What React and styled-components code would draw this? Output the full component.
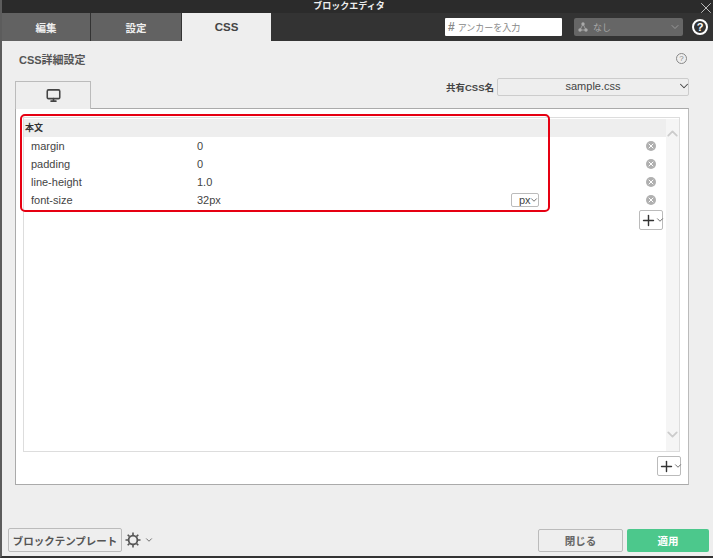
import React from 'react'
import styled, { createGlobalStyle } from 'styled-components'
import { Monitor, ChevronDown, ChevronUp, X, Plus } from 'lucide-react'

const GlobalStyle = createGlobalStyle`
  * { box-sizing: border-box; }
  html, body { margin: 0; padding: 0; }
  body { font-family: "Liberation Sans", "Noto Sans CJK JP", sans-serif; color: #444; }
`

const Window = styled.div`
  width: 713px;
  height: 558px;
  position: relative;
  display: flex;
  flex-direction: column;
  background: #eeeeee;
  border-left: 2px solid #5c5c5c;
  border-bottom: 2px solid #333;
  overflow: hidden;
`

const TitleBar = styled.div`
  height: 13px;
  margin-left: -2px;
  padding-right: 15px;
  background: #2b2b2b;
  color: #eee;
  font-size: 9px;
  font-weight: bold;
  line-height: 12px;
  text-align: center;
  position: relative;
`

const CloseIcon = styled(X)`
  position: absolute;
  right: -2px;
  top: -1px;
  color: #ccc;
  z-index: 1;
`

const TabBar = styled.div`
  height: 28px;
  margin-left: -2px;
  padding-left: 2px;
  background: #333333;
  display: flex;
  align-items: flex-end;
`

const TopTab = styled.div`
  width: ${p => p.$w}px;
  height: 28px;
  margin-right: 1px;
  display: flex;
  align-items: center;
  justify-content: center;
  font-size: ${p => (p.$active ? '11.5px' : '10.5px')};
  font-weight: bold;
  color: ${p => (p.$active ? '#444' : '#eee')};
  background: ${p => (p.$active ? '#eeeeee' : '#626262')};
`

const TopRight = styled.div`
  margin-left: auto;
  height: 28px;
  display: flex;
  align-items: center;
`

const AnchorInput = styled.div`
  width: 117px;
  height: 18px;
  margin-right: 12px;
  padding-left: 3px;
  background: #fff;
  border-radius: 1px;
  display: flex;
  align-items: center;
  font-size: 9px;
  color: #888;
`

const Hash = styled.span`
  font-size: 12px;
  font-weight: bold;
  margin-right: 3px;
`

const NoneSelect = styled.div`
  width: 109px;
  height: 18px;
  margin-right: 9px;
  padding: 0 2px 0 4px;
  background: #666;
  border-radius: 2px;
  display: flex;
  align-items: center;
  gap: 5px;
  font-size: 9px;
  color: #aaa;
`

const NoneArrow = styled(ChevronDown)`
  margin-left: auto;
  color: #999;
`

const HelpTop = styled.div`
  width: 16px;
  height: 16px;
  margin-right: 5px;
  border: 2px solid #fff;
  border-radius: 50%;
  color: #fff;
  font-size: 11px;
  font-weight: bold;
  line-height: 12px;
  text-align: center;
`

const Body = styled.div`
  flex: 1;
  display: flex;
  flex-direction: column;
  padding: 0 24px 0 13px;
`

const HeadRow = styled.div`
  height: 40px;
  display: flex;
  align-items: center;
  padding: 0 2px 4px 4px;
  justify-content: space-between;
  font-size: 11px;
  font-weight: bold;
  color: #555;
`

const HelpSmall = styled.div`
  width: 11px;
  height: 11px;
  margin-top: -1px;
  border: 1px solid #888;
  border-radius: 50%;
  color: #888;
  font-size: 8px;
  line-height: 9px;
  text-align: center;
  font-weight: normal;
`

const TabRow = styled.div`
  height: 27px;
  display: flex;
  justify-content: space-between;
`

const ScreenTab = styled.div`
  width: 76px;
  height: 28px;
  border: 1px solid #bbb;
  border-bottom: none;
  background: #eeeeee;
  display: flex;
  justify-content: center;
  padding-top: 6px;
  color: #444;
  position: relative;
  z-index: 1;
`

const SharedName = styled.div`
  display: flex;
  align-items: flex-start;
  gap: 3px;
  font-size: 9.5px;
  font-weight: bold;
  color: #444;
  line-height: 14px;
`

const SharedSelect = styled.div`
  width: 192px;
  height: 18px;
  margin-top: -3px;
  padding-bottom: 2px;
  border: 1px solid #ccc;
  border-radius: 2px;
  background: #eee;
  display: flex;
  align-items: center;
  justify-content: center;
  position: relative;
  font-size: 11px;
  font-weight: normal;
  color: #444;
`

const SelectArrow = styled(ChevronDown)`
  position: absolute;
  right: -3px;
  top: 0;
  color: #444;
`

const Panel = styled.div`
  width: 674px;
  height: 377px;
  padding: 8px 7px 0 7px;
  background: #fff;
  border: 1px solid #aaa;
  border-right-color: #bbb;
  display: flex;
  flex-direction: column;
`

const InnerBox = styled.div`
  height: 335px;
  margin-right: 1px;
  padding-top: 1px;
  border: 1px solid #ddd;
  display: flex;
  position: relative;
`

const Rows = styled.div`
  flex: 1;
  display: flex;
  flex-direction: column;
`

const SectionHead = styled.div`
  height: 18px;
  padding-left: 1px;
  background: #eeeeee;
  font-size: 9px;
  font-weight: bold;
  line-height: 18px;
  color: #333;
`

const Row = styled.div`
  height: 18px;
  display: flex;
  align-items: center;
  font-size: 11px;
  color: #444;
  padding-right: 10px;
`

const PropName = styled.span`
  width: 173px;
  padding-left: 7px;
`

const PropValue = styled.span`
  flex: 1;
`

const UnitButton = styled.div`
  width: 28px;
  height: 14px;
  margin-right: 107px;
  padding-left: 7px;
  border: 1px solid #bbb;
  border-radius: 2px;
  display: flex;
  align-items: center;
  font-size: 11px;
  color: #444;
`

const SmallArrow = styled(ChevronDown)`
  flex-shrink: 0;
  margin: 0 -3px 0 -2px;
  color: #555;
`

const RemoveDot = styled.div`
  width: 10px;
  height: 10px;
  border-radius: 50%;
  background: #b0b0b0;
  color: #fff;
  display: flex;
  align-items: center;
  justify-content: center;
  margin-left: auto;
`

const AddRow = styled.div`
  display: flex;
  justify-content: flex-end;
  padding-right: ${p => p.$right}px;
  margin-top: ${p => p.$top}px;
`

const AddButton = styled.div`
  width: 24px;
  height: 20px;
  border: 1px solid #bbb;
  border-radius: 2px;
  background: #fff;
  display: flex;
  align-items: center;
  justify-content: center;
  color: #333;
`

const ScrollBar = styled.div`
  width: 13px;
  background: #f5f5f5;
  display: flex;
  flex-direction: column;
  align-items: center;
  justify-content: space-between;
  padding: 6px 0 8px;
  color: #ccc;
`

const Highlight = styled.div`
  position: absolute;
  left: 18px;
  top: 114px;
  width: 530px;
  height: 98px;
  border: 2px solid #e60012;
  border-radius: 5px;
  pointer-events: none;
`

const Footer = styled.div`
  height: 71px;
  display: flex;
  align-items: flex-end;
  padding: 0 4px 4px 6px;
  margin: 0 -24px 0 -13px;
`

const TemplateButton = styled.div`
  width: 114px;
  height: 24px;
  border: 1px solid #bbb;
  border-radius: 2px;
  display: flex;
  align-items: center;
  justify-content: center;
  font-size: 10.5px;
  font-weight: bold;
  color: #555;
`

const Gear = styled.div`
  display: flex;
  align-items: center;
  gap: 3px;
  margin-left: 3px;
  color: #555;
  height: 24px;
`

const CloseButton = styled.div`
  width: 85px;
  height: 23px;
  margin-left: auto;
  border: 1px solid #bbb;
  border-radius: 2px;
  display: flex;
  align-items: center;
  justify-content: center;
  font-size: 10.5px;
  font-weight: bold;
  color: #666;
`

const ApplyButton = styled.div`
  width: 82px;
  height: 23px;
  margin-left: 4px;
  border-radius: 2px;
  background: #4cc88c;
  color: #fff;
  display: flex;
  align-items: center;
  justify-content: center;
  font-size: 10.5px;
  font-weight: bold;
`

const NodesIcon = () => (
  <svg width="10" height="10" viewBox="0 0 10 10" fill="#aaa" stroke="#aaa">
    <path d="M5 2 L2 8 M5 2 L8 8 M2 8 H8" strokeWidth="0.8" fill="none" />
    <circle cx="5" cy="2" r="1.7" stroke="none" />
    <circle cx="2" cy="8" r="1.7" stroke="none" />
    <circle cx="8" cy="8" r="1.7" stroke="none" />
  </svg>
)

const GearIcon = () => (
  <svg width="16" height="16" viewBox="0 0 16 16" fill="none" stroke="currentColor">
    <circle cx="8" cy="8" r="4.4" strokeWidth="1.8" />
    <path d="M8 0.5 V3 M8 13 V15.5 M0.5 8 H3 M13 8 H15.5 M2.7 2.7 L4.4 4.4 M11.6 11.6 L13.3 13.3 M2.7 13.3 L4.4 11.6 M11.6 4.4 L13.3 2.7" strokeWidth="1.6" />
  </svg>
)

const props = [
  { name: 'margin', value: '0' },
  { name: 'padding', value: '0' },
  { name: 'line-height', value: '1.0' },
  { name: 'font-size', value: '32px', unit: 'px' },
]

const App = () => {
  return (
    <Window>
      <GlobalStyle />
      <TitleBar>
        ブロックエディタ
        <CloseIcon size={18} strokeWidth={1.2} />
      </TitleBar>
      <TabBar>
        <TopTab $w={88}>編集</TopTab>
        <TopTab $w={90}>設定</TopTab>
        <TopTab $w={89} $active>CSS</TopTab>
        <TopRight>
          <AnchorInput><Hash>#</Hash>アンカーを入力</AnchorInput>
          <NoneSelect>
            <NodesIcon />
            なし
            <NoneArrow size={12} />
          </NoneSelect>
          <HelpTop>?</HelpTop>
        </TopRight>
      </TabBar>
      <Body>
        <HeadRow>
          CSS詳細設定
          <HelpSmall>?</HelpSmall>
        </HeadRow>
        <TabRow>
          <ScreenTab><Monitor size={15} strokeWidth={2.5} /></ScreenTab>
          <SharedName>
            共有CSS名
            <SharedSelect>sample.css<SelectArrow size={14} strokeWidth={1.8} /></SharedSelect>
          </SharedName>
        </TabRow>
        <Panel>
          <InnerBox>
            <Rows>
              <SectionHead>本文</SectionHead>
              {props.map(p => (
                <Row key={p.name}>
                  <PropName>{p.name}</PropName>
                  <PropValue>{p.value}</PropValue>
                  {p.unit && <UnitButton>{p.unit}<SmallArrow size={10} strokeWidth={2} /></UnitButton>}
                  <RemoveDot><X size={8} strokeWidth={3} /></RemoveDot>
                </Row>
              ))}
              <AddRow $right={3} $top={1}>
                <AddButton><Plus size={17} strokeWidth={2} /><SmallArrow size={10} strokeWidth={2} /></AddButton>
              </AddRow>
            </Rows>
            <ScrollBar>
              <ChevronUp size={17} strokeWidth={2.5} />
              <ChevronDown size={17} strokeWidth={2.5} />
            </ScrollBar>
          </InnerBox>
          <AddRow $right={0} $top={4}>
            <AddButton><Plus size={17} strokeWidth={2} /><SmallArrow size={10} strokeWidth={2} /></AddButton>
          </AddRow>
        </Panel>
        <Footer>
          <TemplateButton>ブロックテンプレート</TemplateButton>
          <Gear><GearIcon /><ChevronDown size={10} /></Gear>
          <CloseButton>閉じる</CloseButton>
          <ApplyButton>適用</ApplyButton>
        </Footer>
      </Body>
      <Highlight />
    </Window>
  )
}

export default App
